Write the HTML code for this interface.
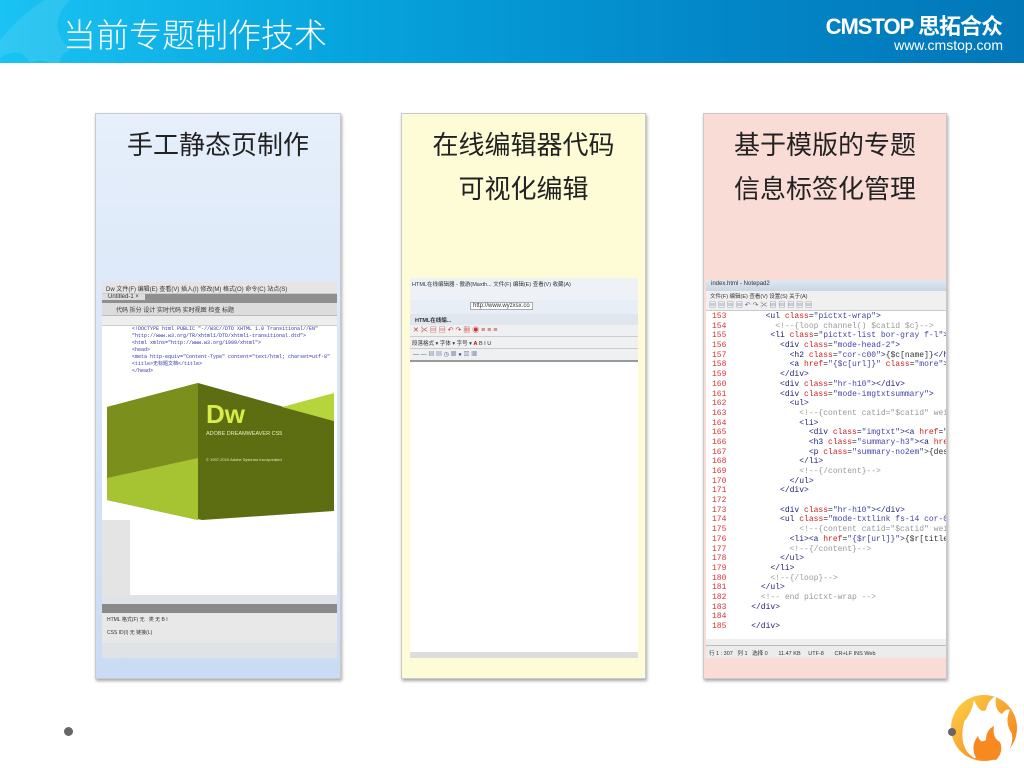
<!DOCTYPE html>
<html><head><meta charset="utf-8">
<style>
*{margin:0;padding:0;box-sizing:border-box}
body{width:1024px;height:768px;position:relative;background:#fff;font-family:"Liberation Sans","Noto Sans CJK SC",sans-serif;overflow:hidden}
.hdr{position:absolute;left:0;top:0;width:1024px;height:63px;background:linear-gradient(90deg,#19c3f2 0%,#06a3dd 35%,#0387c8 70%,#0277b8 100%)}
.title{position:absolute;left:63px;top:9px;color:#fff;font-size:33px;font-family:"Noto Sans CJK SC",sans-serif;font-weight:300}
.logo{position:absolute;right:22px;top:9px;color:#fff;font-size:22px;font-weight:bold;letter-spacing:-1px}
.url{position:absolute;right:21px;top:37px;color:#fff;font-size:14px}
.card{position:absolute;top:113px;height:566px;box-shadow:1px 2px 3px rgba(0,0,0,.35);border:1px solid #c9c9c9}
.ct{position:absolute;left:0;right:0;top:8px;text-align:center;font-size:26px;line-height:44px;color:#222;font-family:"Noto Sans CJK SC",sans-serif;font-weight:400}
.shot{position:absolute;background:#fff;overflow:hidden;font-size:6px;color:#333}
.ln{height:9.7px;line-height:9.7px;font-family:"Liberation Mono",monospace;font-size:8px;white-space:pre}
.ln b{display:inline-block;width:26px;color:#d33;font-weight:normal;padding-left:6px}
.t{color:#227}.a{color:#c22}.s{color:#44a}.c{color:#999}
</style></head><body>
<div class="hdr"></div>
<svg style="position:absolute;left:0;top:0" width="90" height="75"><path d="M0 40 Q20 15 45 0 L70 0 Q45 25 70 50 Q55 55 62 72 Q45 55 30 63 Q20 45 0 58Z" fill="#fff" opacity=".1"/></svg>
<div class="title">当前专题制作技术</div>
<div class="logo">CMSTOP 思拓合众</div>
<div class="url">www.cmstop.com</div>

<div class="card" style="left:95px;width:246px;background:linear-gradient(#e6effb,#c9dcf3)">
 <div class="ct">手工静态页制作</div>
 <div class="shot" style="left:6px;top:168px;width:235px;height:376px;background:#dfe3e8">
  <div style="height:12px;background:#e5e5e5;border-bottom:1px solid #ccc;padding:2px 4px">Dw 文件(F) 编辑(E) 查看(V) 插入(I) 修改(M) 格式(O) 命令(C) 站点(S)</div>
  <div style="height:9px;background:#8f8f8f"><span style="background:#ddd;padding:0 6px">Untitled-1 ×</span></div>
  <div style="height:13px;background:#dcdcdc;border-bottom:1px solid #bbb;padding:2px 14px">代码 拆分 设计 实时代码 实时视图 检查 标题</div>
  <div style="height:10px;background:#eee;border-bottom:1px solid #ccc"></div>
  <div style="height:60px;background:#fff;padding-left:30px;color:#33a;font-family:'Liberation Mono',monospace;font-size:5px;line-height:7px">&lt;!DOCTYPE html PUBLIC "-//W3C//DTD XHTML 1.0 Transitional//EN"<br>"http://www.w3.org/TR/xhtml1/DTD/xhtml1-transitional.dtd"&gt;<br>&lt;html xmlns="http://www.w3.org/1999/xhtml"&gt;<br>&lt;head&gt;<br>&lt;meta http-equiv="Content-Type" content="text/html; charset=utf-8"<br>&lt;title&gt;无标题文档&lt;/title&gt;<br>&lt;/head&gt;</div>
  <div style="position:absolute;left:0;top:101px;width:235px;height:137px;background:#fff">
   <svg width="235" height="137"><polygon points="5,24 96,0 232,38 232,128 100,137 5,117" fill="#5d6d12"/><polygon points="5,24 96,0 96,137 5,117" fill="#7a8f1c"/><polygon points="5,95 96,75 96,137 5,117" fill="#a6c431"/><polygon points="180,24 232,10 232,38" fill="#b5d53a"/><text x="104" y="40" fill="#d8ec4a" font-size="26" font-family="Liberation Sans" font-weight="bold">Dw</text><text x="104" y="52" fill="#e8f0c0" font-size="5.5" font-family="Liberation Sans">ADOBE DREAMWEAVER CS5</text><text x="104" y="78" fill="#e0e8c0" font-size="4" font-family="Liberation Sans">© 1997-2010 Adobe Systems Incorporated</text></svg>
  </div>
  <div style="position:absolute;left:0;top:238px;width:235px;height:75px;background:#fff;border-left:28px solid #e4e4e4"></div>
  <div style="position:absolute;left:0;top:322px;width:235px;height:9px;background:#8a8a8a"></div>
  <div style="position:absolute;left:0;top:331px;width:235px;height:30px;background:#e8e8e8;padding:3px 5px;font-size:5px">HTML 格式(F) 无 &nbsp; 类 无 B I<br><br>CSS ID(I) 无 链接(L)</div>
 </div>
</div>

<div class="card" style="left:401px;width:245px;background:#fefcd6">
 <div class="ct">在线编辑器代码<br>可视化编辑</div>
 <div class="shot" style="left:8px;top:164px;width:228px;height:380px">
  <div style="height:22px;background:#eef2f7;padding:2px;font-size:5.5px">HTML在线编辑器 - 傲游(Maxth... 文件(F) 编辑(E) 查看(V) 收藏(A)</div>
  <div style="height:14px;background:#e8eef5;padding:3px 60px;font-size:6px"><span style="background:#fff;border:1px solid #aaa;padding:0 2px">http://www.wyzxsx.co</span></div>
  <div style="height:11px;background:#dfe6ee;padding:2px 5px;font-size:5.5px;font-weight:bold">HTML在线编...</div>
  <div style="height:37px;background:#eef0f2;border-bottom:2px solid #999">
   <div style="height:12px;border-bottom:1px solid #ccc;color:#c33;font-size:7px;padding-left:3px">✕ ✂ ▤ ▤ ↶ ↷ ▦ ◉ ≡ ≡ ≡</div>
   <div style="height:12px;border-bottom:1px solid #ccc;font-size:5.5px;padding:2px">段落格式 ▾ 字体 ▾ 字号 ▾ <b style="color:#c00">A</b> B I U</div>
   <div style="height:12px;font-size:6px;padding-left:3px;color:#558">— — ▤ ▤ ◷ ▦ ● ▥ ▦</div>
  </div>
  <div style="position:absolute;left:0;bottom:0;width:228px;height:6px;background:#ddd"></div>
 </div>
</div>

<div class="card" style="left:703px;width:244px;background:#f9dcd6">
 <div class="ct">基于模版的专题<br>信息标签化管理</div>
 <div class="shot" style="left:2px;top:166px;width:240px;height:378px;background:#fff">
  <div style="height:11px;background:linear-gradient(#dfe8f2,#c9d6e4);padding:1px 5px;font-size:6px">index.html - Notepad2</div>
  <div style="height:9px;background:#f0f0f0;padding:1px 4px;font-size:5.5px">文件(F) 编辑(E) 查看(V) 设置(S) 关于(A)</div>
  <div style="height:11px;background:#f0f0f0;border-bottom:1px solid #ccc;font-size:7px;color:#668;padding-left:3px">▤ ▤ ▤ ▤ ↶ ↷ ✂ ▤ ▤ ▤ ▤ ▤</div>
  <div style="padding-top:1px">
<div class="ln"><b>153</b>       <span class="t">&lt;ul</span> <span class="a">class</span>=<span class="s">"pictxt-wrap"</span><span class="t">&gt;</span></div>
<div class="ln"><b>154</b>         <span class="c">&lt;!--{loop channel() $catid $c}--&gt;</span></div>
<div class="ln"><b>155</b>        <span class="t">&lt;li</span> <span class="a">class</span>=<span class="s">"pictxt-list bor-gray f-l"</span><span class="t">&gt;</span></div>
<div class="ln"><b>156</b>          <span class="t">&lt;div</span> <span class="a">class</span>=<span class="s">"mode-head-2"</span><span class="t">&gt;</span></div>
<div class="ln"><b>157</b>            <span class="t">&lt;h2</span> <span class="a">class</span>=<span class="s">"cor-c00"</span><span class="t">&gt;</span>{$c[name]}<span class="t">&lt;/h2&gt;</span></div>
<div class="ln"><b>158</b>            <span class="t">&lt;a</span> <span class="a">href</span>=<span class="s">"{$c[url]}"</span> <span class="a">class</span>=<span class="s">"more"</span>&gt;更</div>
<div class="ln"><b>159</b>          <span class="t">&lt;/div&gt;</span></div>
<div class="ln"><b>160</b>          <span class="t">&lt;div</span> <span class="a">class</span>=<span class="s">"hr-h10"</span><span class="t">&gt;&lt;/div&gt;</span></div>
<div class="ln"><b>161</b>          <span class="t">&lt;div</span> <span class="a">class</span>=<span class="s">"mode-imgtxtsummary"</span><span class="t">&gt;</span></div>
<div class="ln"><b>162</b>            <span class="t">&lt;ul&gt;</span></div>
<div class="ln"><b>163</b>              <span class="c">&lt;!--{content catid="$catid" wei</span></div>
<div class="ln"><b>164</b>              <span class="t">&lt;li&gt;</span></div>
<div class="ln"><b>165</b>                <span class="t">&lt;div</span> <span class="a">class</span>=<span class="s">"imgtxt"</span><span class="t">&gt;&lt;a</span> <span class="a">href</span>="{$</div>
<div class="ln"><b>166</b>                <span class="t">&lt;h3</span> <span class="a">class</span>=<span class="s">"summary-h3"</span><span class="t">&gt;&lt;a</span> <span class="a">href</span>=</div>
<div class="ln"><b>167</b>                <span class="t">&lt;p</span> <span class="a">class</span>=<span class="s">"summary-no2em"</span>&gt;{descr</div>
<div class="ln"><b>168</b>              <span class="t">&lt;/li&gt;</span></div>
<div class="ln"><b>169</b>              <span class="c">&lt;!--{/content}--&gt;</span></div>
<div class="ln"><b>170</b>            <span class="t">&lt;/ul&gt;</span></div>
<div class="ln"><b>171</b>          <span class="t">&lt;/div&gt;</span></div>
<div class="ln"><b>172</b></div>
<div class="ln"><b>173</b>          <span class="t">&lt;div</span> <span class="a">class</span>=<span class="s">"hr-h10"</span><span class="t">&gt;&lt;/div&gt;</span></div>
<div class="ln"><b>174</b>          <span class="t">&lt;ul</span> <span class="a">class</span>=<span class="s">"mode-txtlink fs-14 cor-06c</span></div>
<div class="ln"><b>175</b>              <span class="c">&lt;!--{content catid="$catid" weigh</span></div>
<div class="ln"><b>176</b>            <span class="t">&lt;li&gt;&lt;a</span> <span class="a">href</span>=<span class="s">"{$r[url]}"</span>&gt;{$r[title]}</div>
<div class="ln"><b>177</b>            <span class="c">&lt;!--{/content}--&gt;</span></div>
<div class="ln"><b>178</b>          <span class="t">&lt;/ul&gt;</span></div>
<div class="ln"><b>179</b>        <span class="t">&lt;/li&gt;</span></div>
<div class="ln"><b>180</b>        <span class="c">&lt;!--{/loop}--&gt;</span></div>
<div class="ln"><b>181</b>      <span class="t">&lt;/ul&gt;</span></div>
<div class="ln"><b>182</b>      <span class="c">&lt;!-- end pictxt-wrap --&gt;</span></div>
<div class="ln"><b>183</b>    <span class="t">&lt;/div&gt;</span></div>
<div class="ln"><b>184</b></div>
<div class="ln"><b>185</b>    <span class="t">&lt;/div&gt;</span></div>
  </div>
  <div style="position:absolute;left:0;bottom:13px;width:240px;height:6px;background:#eee"></div>
  <div style="position:absolute;left:0;bottom:0;width:240px;height:13px;background:#ececec;border-top:1px solid #bbb;font-size:5.5px;padding:3px">行 1 : 307 &nbsp; 列 1 &nbsp; 选择 0 &nbsp; &nbsp; &nbsp; 11.47 KB &nbsp; &nbsp; UTF-8 &nbsp; &nbsp; &nbsp; CR+LF INS Web</div>
 </div>
</div>

<div style="position:absolute;left:64px;top:727px;width:9px;height:9px;border-radius:50%;background:#666"></div>
<svg style="position:absolute;left:944px;top:692px" width="76" height="72" viewBox="0 0 76 72">
 <defs><linearGradient id="g" x1="0" y1="0" x2="1" y2="1"><stop offset="0" stop-color="#fcd34a"/><stop offset="1" stop-color="#f27a16"/></linearGradient></defs>
 <circle cx="40" cy="36" r="33" fill="url(#g)"/>
 <path d="M20 30 Q28 20 30 8 Q36 22 42 18 Q44 8 52 4 Q50 18 58 22 Q62 16 66 18 Q60 30 68 42 Q70 56 58 66 L30 66 Q14 56 20 30Z" fill="#fff"/>
 <path d="M32 66 Q26 54 34 44 Q36 52 42 48 Q42 38 50 34 Q48 46 56 50 Q60 60 52 68Z" fill="#f68a1e"/>
 <circle cx="8" cy="40" r="4" fill="#666"/>
</svg>
</body></html>
